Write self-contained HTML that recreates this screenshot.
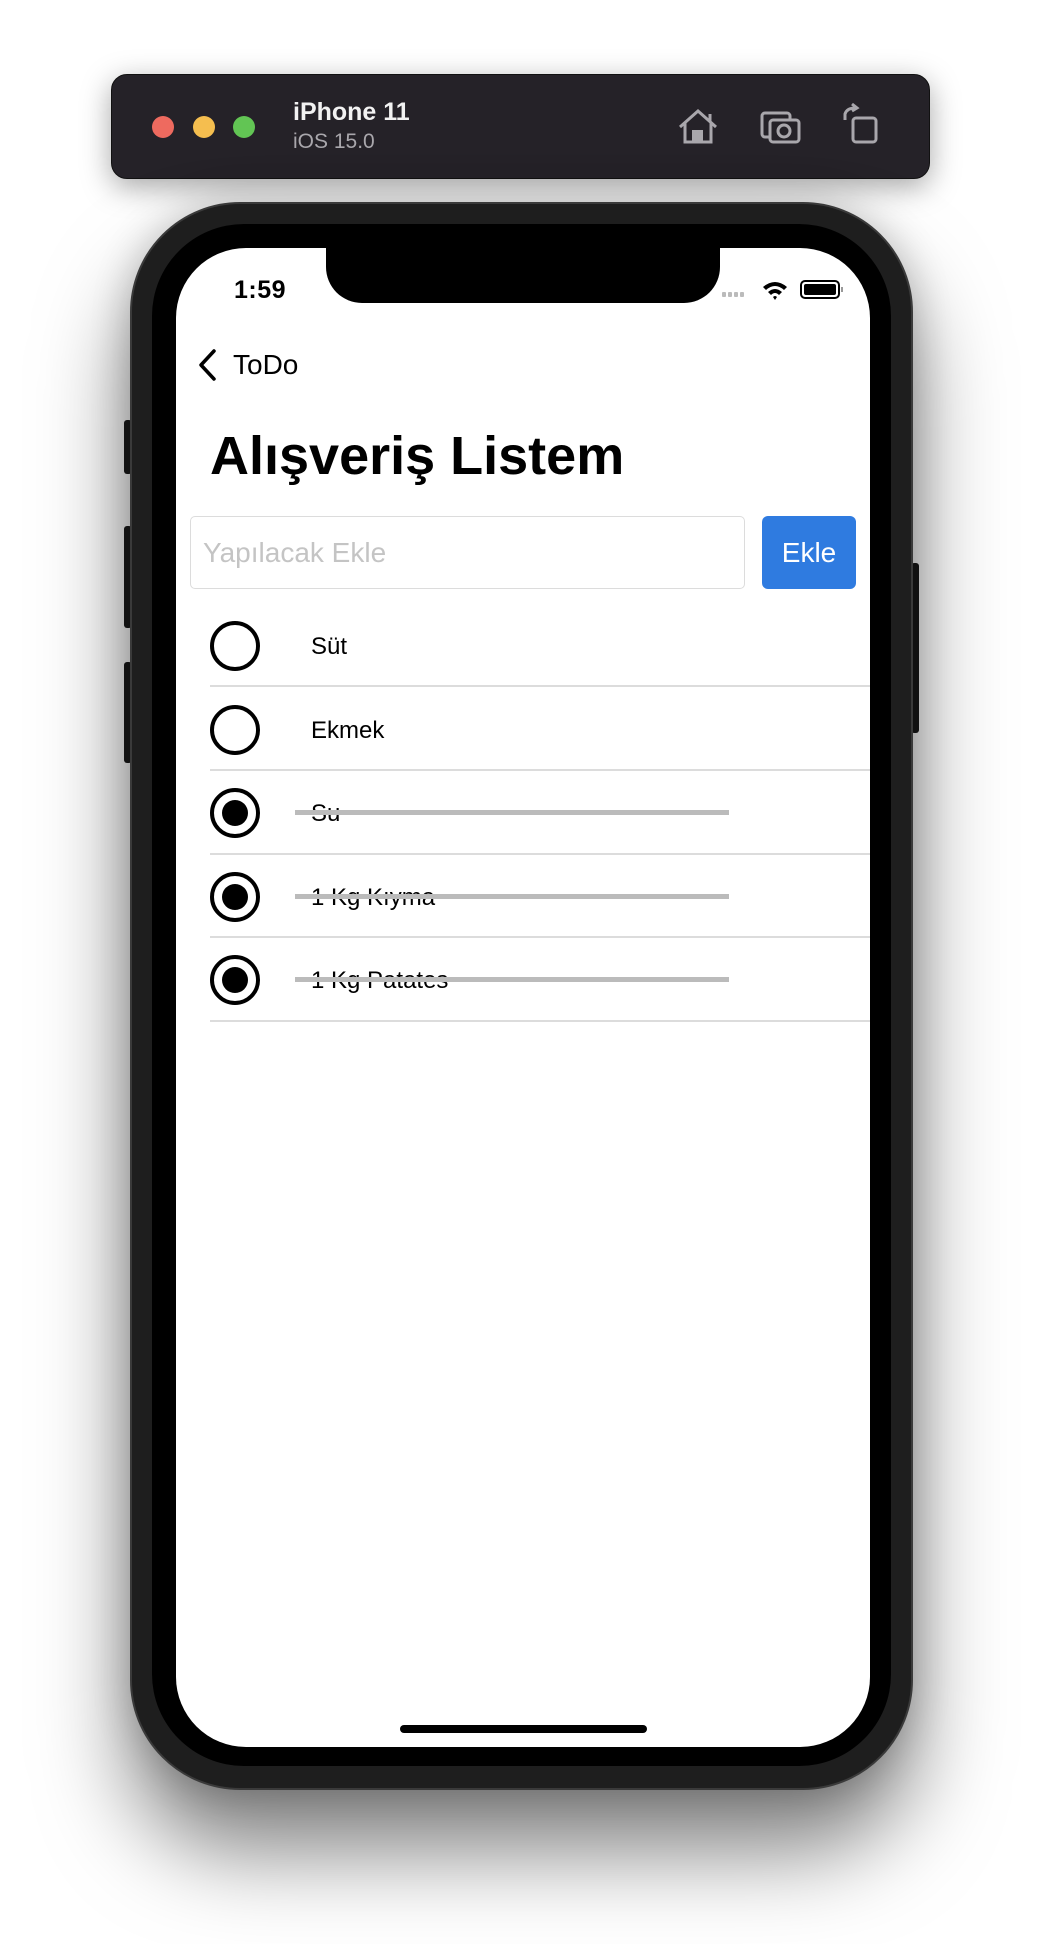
<!DOCTYPE html>
<html><head><meta charset="utf-8"><style>
html,body{margin:0;padding:0;background:#fff;}
body{width:1044px;height:1944px;position:relative;overflow:hidden;font-family:"Liberation Sans",sans-serif;}
.abs{position:absolute;}
.tb{left:111px;top:74px;width:819px;height:105px;background:#252228;border-radius:16px;box-shadow:0 8px 30px rgba(0,0,0,0.35);border:1px solid #111;box-sizing:border-box;}
.dot{width:22px;height:22px;border-radius:50%;top:116px;}
.phone{left:130px;top:202px;width:783px;height:1588px;background:#1e1e1e;border-radius:110px;box-shadow:0 60px 90px rgba(0,0,0,0.5),0 0 40px rgba(0,0,0,0.2);border:2px solid #3a3a3a;box-sizing:border-box;}
.bezel{left:152px;top:224px;width:739px;height:1542px;background:#000;border-radius:92px;}
.screen{left:176px;top:248px;width:694px;height:1499px;background:#fff;border-radius:70px;overflow:hidden;}
.btn{background:#1a1a1a;border-radius:3px;}
.sep{left:210px;width:660px;height:2px;background:#dcdcdc;}
.circ{left:210px;width:42px;height:42px;border:4px solid #000;border-radius:50%;}
.circ.on::after{content:"";position:absolute;left:8px;top:8px;width:26px;height:26px;border-radius:50%;background:#000;}
.txt{left:311px;font-size:24px;color:#000;line-height:30px;}
.strike{left:295px;width:434px;height:5px;background:#bbb;}
</style></head><body>
<div class="abs tb"></div>
<div class="abs dot" style="left:152px;background:#ee6a5f"></div>
<div class="abs dot" style="left:193px;background:#f5be4f"></div>
<div class="abs dot" style="left:233px;background:#62c554"></div>
<div class="abs" style="left:293px;top:98px;color:#f2f2f2;font-weight:bold;font-size:25px;">iPhone 11</div>
<div class="abs" style="left:293px;top:130px;color:#a9a7ac;font-size:21px;">iOS 15.0</div>
<svg class="abs" style="left:670px;top:100px" width="220" height="52" viewBox="670 100 220 52" fill="none" stroke="#a9a7ac" stroke-width="3">
<path d="M680 127 L698 111 L716 127 M685 123 V142 H711 V123 M710 114 V121"/>
<rect x="692" y="130" width="11" height="12" fill="#a9a7ac" stroke="none"/>
<rect x="762" y="113" width="28" height="24" rx="3"/>
<rect x="770" y="120" width="29" height="22" rx="3" fill="#252228"/>
<circle cx="784" cy="131" r="6"/>
<path d="M845 120 V114 Q847 108 855 108 M852 104 L857 108 L852 111"/>
<rect x="853" y="118" width="23" height="24" rx="3"/>
</svg>
<div class="abs btn" style="left:124px;top:420px;width:8px;height:54px"></div>
<div class="abs btn" style="left:124px;top:526px;width:8px;height:102px"></div>
<div class="abs btn" style="left:124px;top:662px;width:8px;height:101px"></div>
<div class="abs btn" style="left:911px;top:563px;width:8px;height:170px"></div>
<div class="abs phone"></div>
<div class="abs bezel"></div>
<div class="abs screen">
<div class="abs" style="left:150px;top:-10px;width:394px;height:65px;background:#000;border-radius:0 0 36px 36px"></div>
</div>
<div class="abs" style="left:234px;top:276px;font-size:25px;font-weight:bold;letter-spacing:0.5px">1:59</div>
<svg class="abs" style="left:720px;top:278px" width="125" height="24">
<g fill="#bbb"><rect x="2" y="14" width="4" height="5" rx="1"/><rect x="8" y="14" width="4" height="5" rx="1"/><rect x="14" y="14" width="4" height="5" rx="1"/><rect x="20" y="14" width="4" height="5" rx="1"/></g>
<path d="M43 9 Q55 -1 67 9 L64 12 Q55 4 46 12Z M48 14 Q55 8 62 14 L59 17 Q55 13 51 17Z M53 19 L55 22 L57 19 Q55 17 53 19Z" fill="#000"/>
<rect x="81" y="3" width="38" height="17" rx="4" fill="none" stroke="#000" stroke-width="2"/>
<rect x="84" y="6" width="32" height="11" rx="2" fill="#000"/>
<rect x="121" y="9" width="2" height="5" fill="#999"/>
</svg>
<svg class="abs" style="left:195px;top:348px" width="24" height="34"><path d="M19 3 L6 17 L19 31" fill="none" stroke="#000" stroke-width="3.5" stroke-linecap="round" stroke-linejoin="round"/></svg>
<div class="abs" style="left:233px;top:349px;font-size:28px;">ToDo</div>
<div class="abs" style="left:210px;top:425px;font-size:54px;font-weight:bold;letter-spacing:0px;">Alışveriş Listem</div>
<div class="abs" style="left:190px;top:516px;width:555px;height:73px;border:1.5px solid #dcdcdc;border-radius:5px;box-sizing:border-box"></div>
<div class="abs" style="left:203px;top:537px;font-size:28px;color:#c4c4c4;">Yapılacak Ekle</div>
<div class="abs" style="left:762px;top:516px;width:94px;height:73px;background:#2f7be0;border-radius:6px;color:#fff;font-size:28px;line-height:73px;text-align:center">Ekle</div>

<div class="abs circ" style="top:621px"></div><div class="abs txt" style="top:632px">Süt</div>
<div class="abs sep" style="top:685px"></div>
<div class="abs circ" style="top:705px"></div><div class="abs txt" style="top:716px">Ekmek</div>
<div class="abs sep" style="top:769px"></div>
<div class="abs circ on" style="top:788px"></div><div class="abs txt" style="top:799px">Su</div><div class="abs strike" style="top:810px"></div>
<div class="abs sep" style="top:853px"></div>
<div class="abs circ on" style="top:872px"></div><div class="abs txt" style="top:883px">1 Kg Kıyma</div><div class="abs strike" style="top:894px"></div>
<div class="abs sep" style="top:936px"></div>
<div class="abs circ on" style="top:955px"></div><div class="abs txt" style="top:966px">1 Kg Patates</div><div class="abs strike" style="top:977px"></div>
<div class="abs sep" style="top:1020px"></div>
<div class="abs" style="left:400px;top:1725px;width:247px;height:8px;background:#000;border-radius:4px"></div>
</body></html>
